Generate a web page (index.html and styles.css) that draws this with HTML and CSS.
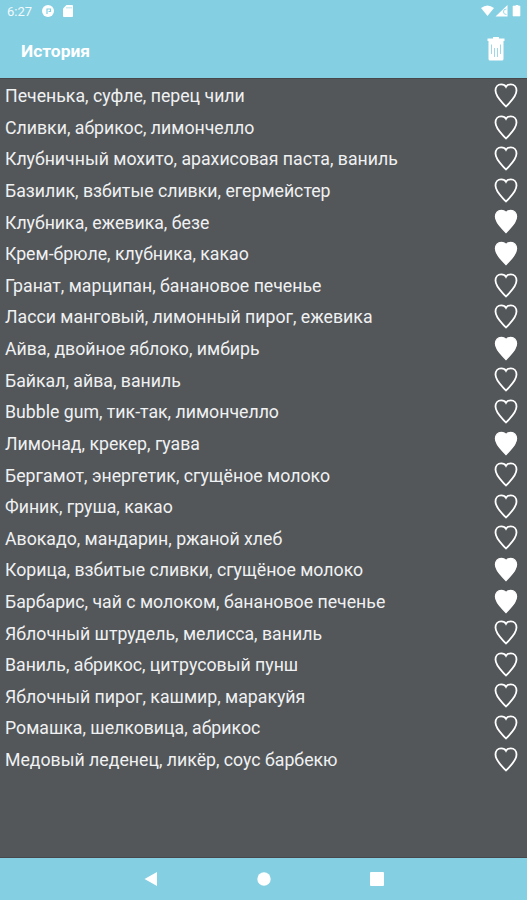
FILE: index.html
```html
<!DOCTYPE html>
<html lang="ru">
<head>
    <meta charset="UTF-8">
    <meta name="viewport" content="width=device-width, initial-scale=1.0">
    <title>История</title>
    <link rel="stylesheet" href="styles.css">
</head>
<body>
    <svg class="sprite">
        <symbol id="heart" viewBox="0 0 24 25">
            <path d="M12 3.800C11 1.900 9.300 1.400 7.200 1.400C3.800 1.400 1.500 4 1.500 7.600C1.500 14 7.500 18.500 12 23.500C16.500 18.500 22.500 14 22.500 7.600C22.500 4 20.200 1.400 16.800 1.400C14.700 1.400 13 1.900 12 3.800Z"/>
        </symbol>
    </svg>

    <header class="header">
        <div class="status-bar">
            <span class="time">6:27</span>
            <svg class="status-app" viewBox="0 0 12 12">
                <circle cx="6" cy="6" r="6" fill="#fff"/>
                <path d="M5 9V4H8.500V6.500H6.500" fill="none" stroke="#84cfe2" stroke-width="1.200"/>
            </svg>
            <svg class="status-card" viewBox="0 0 10 12">
                <path d="M3.500 0H9Q10 0 10 1V11Q10 12 9 12H1Q0 12 0 11V3.500Z" fill="#fff"/>
                <path d="M4 2V3.500M6 2V3.500M8 2V3.500" stroke="#84cfe2" stroke-width=".8"/>
            </svg>
            <svg class="status-right" viewBox="0 0 40 12">
                <path d="M0 3Q6.500 -2 13 3L6.500 11Z" fill="#fff"/>
                <path d="M26.500 0V11.500H14.500Z" fill="#fff"/>
                <path d="M25.500 4Q22 4 22.500 7Q22.500 9.500 25.500 9.500" fill="none" stroke="#84cfe2" stroke-width=".8"/>
                <path d="M33 1H35V0H37V1H39V11H32V1Z" fill="#fff" stroke="#fff" stroke-width=".6"/>
            </svg>
        </div>
        <div class="toolbar">
            <h1>История</h1>
            <svg class="trash" viewBox="0 0 18 24">
                <path d="M6 0H12V1.500H17.500V4H.5V1.500H6Z" fill="#fff"/>
                <path d="M1.500 4H16.500V22Q16.500 23.500 15 23.500H3Q1.500 23.500 1.500 22Z" fill="#fff"/>
                <path d="M4.500 7.500V17M7.500 11V20M10.500 11V20M13.500 7.500V17" stroke="#84cfe2" stroke-width=".8"/>
            </svg>
        </div>
    </header>

    <ul class="history">
        <li><span>Печенька, суфле, перец чили</span><svg class="heart"><use href="#heart"/></svg></li>
        <li><span>Сливки, абрикос, лимончелло</span><svg class="heart"><use href="#heart"/></svg></li>
        <li><span>Клубничный мохито, арахисовая паста, ваниль</span><svg class="heart"><use href="#heart"/></svg></li>
        <li><span>Базилик, взбитые сливки, егермейстер</span><svg class="heart"><use href="#heart"/></svg></li>
        <li><span>Клубника, ежевика, безе</span><svg class="heart active"><use href="#heart"/></svg></li>
        <li><span>Крем-брюле, клубника, какао</span><svg class="heart active"><use href="#heart"/></svg></li>
        <li><span>Гранат, марципан, банановое печенье</span><svg class="heart"><use href="#heart"/></svg></li>
        <li><span>Ласси манговый, лимонный пирог, ежевика</span><svg class="heart"><use href="#heart"/></svg></li>
        <li><span>Айва, двойное яблоко, имбирь</span><svg class="heart active"><use href="#heart"/></svg></li>
        <li><span>Байкал, айва, ваниль</span><svg class="heart"><use href="#heart"/></svg></li>
        <li><span>Bubble gum, тик-так, лимончелло</span><svg class="heart"><use href="#heart"/></svg></li>
        <li><span>Лимонад, крекер, гуава</span><svg class="heart active"><use href="#heart"/></svg></li>
        <li><span>Бергамот, энергетик, сгущёное молоко</span><svg class="heart"><use href="#heart"/></svg></li>
        <li><span>Финик, груша, какао</span><svg class="heart"><use href="#heart"/></svg></li>
        <li><span>Авокадо, мандарин, ржаной хлеб</span><svg class="heart"><use href="#heart"/></svg></li>
        <li><span>Корица, взбитые сливки, сгущёное молоко</span><svg class="heart active"><use href="#heart"/></svg></li>
        <li><span>Барбарис, чай с молоком, банановое печенье</span><svg class="heart active"><use href="#heart"/></svg></li>
        <li><span>Яблочный штрудель, мелисса, ваниль</span><svg class="heart"><use href="#heart"/></svg></li>
        <li><span>Ваниль, абрикос, цитрусовый пунш</span><svg class="heart"><use href="#heart"/></svg></li>
        <li><span>Яблочный пирог, кашмир, маракуйя</span><svg class="heart"><use href="#heart"/></svg></li>
        <li><span>Ромашка, шелковица, абрикос</span><svg class="heart"><use href="#heart"/></svg></li>
        <li><span>Медовый леденец, ликёр, соус барбекю</span><svg class="heart"><use href="#heart"/></svg></li>
    </ul>

    <nav class="nav-bar">
        <svg viewBox="0 0 14 14"><path d="M.5 7L13 0V14Z"/></svg>
        <svg viewBox="0 0 14 14"><circle cx="7" cy="7" r="6.700"/></svg>
        <svg viewBox="0 0 14 14"><rect width="14" height="14" rx="1"/></svg>
    </nav>
</body>
</html>
```
FILE: styles.css
```css
* {
    box-sizing: border-box;
}

body {
    margin: 0;
    height: 100vh;
    display: flex;
    flex-direction: column;
    overflow: hidden;
    background-color: #53575a;
    color: #f0f1f2;
    font-family: Roboto, "Noto Sans", sans-serif;
}

.sprite {
    display: none;
}

.header {
    height: 79px;
    background-color: #84cfe2;
    border-bottom: 1px solid #46484c;
    color: #fff;
}

.status-bar {
    display: flex;
    align-items: center;
    height: 22px;
    padding: 0 6px 0 7px;
}

.time {
    width: 35px;
    font-size: 13px;
    opacity: .9;
}

.status-app {
    width: 12px;
    height: 12px;
    margin-right: 9px;
}

.status-card {
    width: 10px;
    height: 12px;
}

.status-right {
    width: 40px;
    height: 12px;
    margin-left: auto;
}

.toolbar {
    display: flex;
    align-items: center;
    justify-content: space-between;
    height: 54px;
    padding: 0 22px 0 21px;
}

h1 {
    margin: 3px 0 0;
    font-size: 17.400px;
    font-weight: bold;
}

.trash {
    width: 18px;
    height: 24px;
}

.history {
    flex: 1;
    margin: 0;
    padding: 1.400px 9px 0 5px;
    list-style: none;
    font-size: 17.720px;
}

.history li {
    display: flex;
    align-items: center;
    justify-content: space-between;
    height: 31.620px;
}

.heart {
    width: 24px;
    height: 25px;
    margin-bottom: 1.600px;
    fill: none;
    stroke: #fff;
    stroke-width: 1.800;
}

.heart.active {
    fill: #fff;
    stroke-width: 1.400;
}

.nav-bar {
    display: flex;
    align-items: center;
    justify-content: space-between;
    height: 43px;
    padding: 0 143px 0 144px;
    background-color: #84cfe2;
    border-top: 1px solid #46484c;
}

.nav-bar svg {
    width: 14px;
    height: 14px;
    fill: #fff;
}
```
